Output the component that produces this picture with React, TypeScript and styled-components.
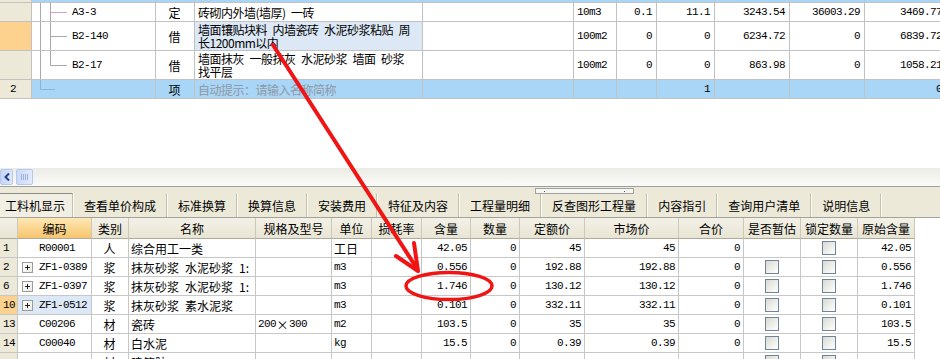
import React from 'react';
import styled, { createGlobalStyle } from 'styled-components';

const CJK = `"Noto Sans CJK SC", "Noto Sans", sans-serif`;
const MONO = `"Liberation Mono", "Noto Sans CJK SC", monospace`;

const GlobalStyle = createGlobalStyle`
  html, body { margin: 0; padding: 0; background: #fff; }
  body { font-family: ${CJK}; font-size: 12px; color: #000; }
  * { box-sizing: border-box; }
`;

const TOP_COLS = '32px 124px 39px 228px 151px 43px 40px 58px 75px 75px 82px';
const LOW_COLS =
  '18px 74px 37px 127px 76px 40px 50px 49px 49px 65px 94px 65px 57px 57px 57px';

type Align = 'left' | 'center' | 'right';
const justify = (a?: Align) =>
  a === 'center' ? 'center' : a === 'right' ? 'flex-end' : 'flex-start';

// the old grid font has half-width (6px) spaces; an en space gives the same gap
const wide = (s: string) => s.replace(/ /g, '\u2002');

interface TopItem {
  ind: string;
  indHot?: boolean;
  code: string;
  tree: 'mid' | 'last' | 'tail';
  pink?: boolean;
  type: string;
  name: string[];
  placeholder?: boolean;
  nameSel?: boolean;
  unit: string;
  vals: string[];
  h: number;
  blue?: boolean;
}

const topRows: TopItem[] = [
  {
    ind: '',
    code: 'A3-3',
    tree: 'mid',
    pink: true,
    type: '定',
    name: ['砖砌内外墙(墙厚) 一砖'],
    unit: '10m3',
    vals: ['0.1', '11.1', '3243.54', '36003.29', '3469.77'],
    h: 19,
  },
  {
    ind: '',
    indHot: true,
    code: 'B2-140',
    tree: 'mid',
    type: '借',
    name: ['墙面镶贴块料 内墙瓷砖 水泥砂浆粘贴 周', '长1200mm以内'],
    nameSel: true,
    unit: '100m2',
    vals: ['0', '0', '6234.72', '0', '6839.72'],
    h: 29,
  },
  {
    ind: '',
    code: 'B2-17',
    tree: 'last',
    type: '借',
    name: ['墙面抹灰 一般抹灰 水泥砂浆 墙面 砂浆', '找平层'],
    unit: '100m2',
    vals: ['0', '0', '863.98', '0', '1058.21'],
    h: 29,
  },
  {
    ind: '2',
    code: '',
    tree: 'tail',
    type: '项',
    name: ['自动提示：请输入名称简称'],
    placeholder: true,
    unit: '',
    vals: ['', '1', '', '', '0'],
    h: 19,
    blue: true,
  },
];

interface LowItem {
  no: string;
  hot?: boolean;
  code: string;
  plus?: boolean;
  sel?: boolean;
  kind: string;
  name: string;
  spec?: boolean;
  unit: string;
  unitCjk?: boolean;
  qty: string;
  count: string;
  base: string;
  market: string;
  total: string;
  est: boolean;
  lock: boolean;
  orig: string;
}

const lowRows: LowItem[] = [
  { no: '1', code: 'R00001', kind: '人', name: '综合用工一类', unit: '工日', unitCjk: true, qty: '42.05', count: '0', base: '45', market: '45', total: '0', est: false, lock: true, orig: '42.05' },
  { no: '2', code: 'ZF1-0389', plus: true, kind: '浆', name: '抹灰砂浆 水泥砂浆 1:', unit: 'm3', qty: '0.556', count: '0', base: '192.88', market: '192.88', total: '0', est: true, lock: true, orig: '0.556' },
  { no: '6', code: 'ZF1-0397', plus: true, kind: '浆', name: '抹灰砂浆 水泥砂浆 1:', unit: 'm3', qty: '1.746', count: '0', base: '130.12', market: '130.12', total: '0', est: true, lock: true, orig: '1.746' },
  { no: '10', hot: true, code: 'ZF1-0512', plus: true, sel: true, kind: '浆', name: '抹灰砂浆 素水泥浆', unit: 'm3', qty: '0.101', count: '0', base: '332.11', market: '332.11', total: '0', est: true, lock: true, orig: '0.101' },
  { no: '13', code: 'C00206', kind: '材', name: '瓷砖', spec: true, unit: 'm2', qty: '103.5', count: '0', base: '35', market: '35', total: '0', est: true, lock: true, orig: '103.5' },
  { no: '14', code: 'C00040', kind: '材', name: '白水泥', unit: 'kg', qty: '15.5', count: '0', base: '0.39', market: '0.39', total: '0', est: true, lock: true, orig: '15.5' },
  { no: '', code: '', kind: '材', name: '建筑胶', unit: '', qty: '', count: '', base: '', market: '', total: '', est: true, lock: true, orig: '' },
];

const headers = [
  '', '编码', '类别', '名称', '规格及型号', '单位', '损耗率', '含量', '数量',
  '定额价', '市场价', '合价', '是否暂估', '锁定数量', '原始含量',
];

const tabs = [
  '工料机显示', '查看单价构成', '标准换算', '换算信息', '安装费用', '特征及内容',
  '工程量明细', '反查图形工程量', '内容指引', '查询用户清单', '说明信息',
];

function TreeLines({ h, kind, pink }: { h: number; kind: TopItem['tree']; pink?: boolean }) {
  const mid = kind === 'tail' ? 9.5 : Math.round(h / 2) + 0.5;
  const line = '#a9a9a9';
  if (kind === 'tail') {
    return (
      <TreeSvg width={36} height={h}>
        <line x1={8.5} y1={0} x2={8.5} y2={mid} stroke="#8fb4d6" />
        <line x1={8.5} y1={mid} x2={23} y2={mid} stroke="#8fb4d6" />
      </TreeSvg>
    );
  }
  return (
    <TreeSvg width={36} height={h}>
      <line x1={8.5} y1={0} x2={8.5} y2={h} stroke={line} />
      <line x1={18.5} y1={0} x2={18.5} y2={kind === 'last' ? mid : h} stroke={line} />
      <line x1={18.5} y1={mid} x2={35} y2={mid} stroke={pink ? '#d3a2cc' : line} />
    </TreeSvg>
  );
}

function TopGrid() {
  return (
    <TopWrap>
      <TopRow $h={3}>
        <IndCell />
        {Array.from({ length: 10 }).map((_, i) => (
          <TopCell key={i} $bg="#a9d5f6" />
        ))}
      </TopRow>
      {topRows.map((r, i) => {
        const bg = r.blue ? '#a9d5f6' : '#fff';
        return (
          <TopRow key={i} $h={r.h}>
            <IndCell $hot={r.indHot}>{r.ind}</IndCell>
            <TreeCell $bg={bg}>
              <TreeLines h={r.h - 1} kind={r.tree} pink={r.pink} />
              <Code>{r.code}</Code>
            </TreeCell>
            <TopCell $bg={bg} $align="center">{r.type}</TopCell>
            <NameCell $bg={r.nameSel ? '#dce8f6' : bg} $muted={r.placeholder}>
              {r.name.map((n, j) => (
                <div key={j}>{wide(n)}</div>
              ))}
            </NameCell>
            <TopCell $bg={bg} />
            <TopCell $bg={bg} $mono>{r.unit}</TopCell>
            {r.vals.map((v, j) => (
              <TopCell key={j} $bg={bg} $mono $align="right">{v}</TopCell>
            ))}
          </TopRow>
        );
      })}
    </TopWrap>
  );
}

function ScrollBar() {
  return (
    <HScroll>
      <ArrowBtn>
        <svg width={8} height={10} viewBox="0 0 8 10">
          <path d="M6 1.5 L2.5 5 L6 8.5" fill="none" stroke="#23428a" strokeWidth={2} />
        </svg>
      </ArrowBtn>
      <Thumb>
        <Grip />
        <Grip />
        <Grip />
        <Grip />
      </Thumb>
    </HScroll>
  );
}

function Tabs() {
  return (
    <TabBar>
      <Splitter>
        <Dot />
        <Dot />
      </Splitter>
      {tabs.map((t, i) => (
        <Tab key={t} $active={i === 0}>{t}</Tab>
      ))}
    </TabBar>
  );
}

function LowerGrid() {
  return (
    <LowWrap>
      <LowRow $head>
        {headers.map((h, i) => (
          <HeadCell key={i} $hot={i === 1}>{h}</HeadCell>
        ))}
      </LowRow>
      {lowRows.map((r, i) => (
        <LowRow key={i}>
          <NoCell $hot={r.hot}>{r.no}</NoCell>
          <CodeCell $sel={r.sel}>
            {r.plus ? <PlusBox /> : <PlusSpace />}
            {r.code}
          </CodeCell>
          <LowCell $align="center">{r.kind}</LowCell>
          <LowCell>{wide(r.name)}</LowCell>
          <LowCell $mono>
            {r.spec ? (
              <>
                200<Wide>×</Wide>300
              </>
            ) : null}
          </LowCell>
          <LowCell $mono={!r.unitCjk}>{r.unit}</LowCell>
          <LowCell />
          <LowCell $mono $align="right">{r.qty}</LowCell>
          <LowCell $mono $align="right">{r.count}</LowCell>
          <LowCell $mono $align="right">{r.base}</LowCell>
          <LowCell $mono $align="right">{r.market}</LowCell>
          <LowCell $mono $align="right">{r.total}</LowCell>
          <LowCell $align="center">{r.est && <Check />}</LowCell>
          <LowCell $align="center">{r.lock && <Check />}</LowCell>
          <LowCell $mono $align="right">{r.orig}</LowCell>
        </LowRow>
      ))}
    </LowWrap>
  );
}

export default function App() {
  return (
    <>
      <GlobalStyle />
      <Page>
        <TopGrid />
        <Blank />
        <ScrollBar />
        <Tabs />
        <LowerGrid />
        <Overlay width={940} height={359} viewBox="0 0 940 359">
          <line x1={273} y1={45} x2={416} y2={267} stroke="#f01414" strokeWidth={4} strokeLinecap="round" />
          <polyline
            points="396,256 418,271 414,243"
            fill="none"
            stroke="#f01414"
            strokeWidth={4}
            strokeLinecap="round"
            strokeLinejoin="round"
          />
          <ellipse cx={449} cy={286} rx={43} ry={13.5} fill="none" stroke="#f01414" strokeWidth={3.5} />
        </Overlay>
      </Page>
    </>
  );
}

const Page = styled.div`
  position: relative;
  width: 940px;
  height: 359px;
  overflow: hidden;
  display: flex;
  flex-direction: column;
  background: #fff;
`;

const TopWrap = styled.div`
  display: flex;
  flex-direction: column;
  flex-shrink: 0;
`;

const TopRow = styled.div<{ $h: number }>`
  display: grid;
  grid-template-columns: ${TOP_COLS};
  height: ${(p) => p.$h}px;
  flex-shrink: 0;
`;

const TopCell = styled.div<{ $bg?: string; $align?: Align; $mono?: boolean }>`
  display: flex;
  align-items: center;
  justify-content: ${(p) => justify(p.$align)};
  padding: 0 4px 0 3px;
  background: ${(p) => p.$bg ?? '#fff'};
  border-right: 1px solid #c2c2c2;
  border-bottom: 1px solid #c2c2c2;
  overflow: hidden;
  white-space: nowrap;
  font-family: ${(p) => (p.$mono ? MONO : CJK)};
  font-size: ${(p) => (p.$mono ? '11px' : '12px')};
  letter-spacing: ${(p) => (p.$mono ? '-0.6px' : '0')};
`;

const IndCell = styled.div<{ $hot?: boolean }>`
  display: flex;
  align-items: center;
  padding-left: 10px;
  background: ${(p) => (p.$hot ? '#fdd28f' : '#ece9d8')};
  border-right: 1px solid #c2c2c2;
  border-bottom: 1px solid #c2c2c2;
  font-family: ${MONO};
  font-size: 11px;
  letter-spacing: -0.6px;
`;

const TreeCell = styled.div<{ $bg: string }>`
  display: flex;
  align-items: center;
  background: ${(p) => p.$bg};
  border-right: 1px solid #c2c2c2;
  border-bottom: 1px solid #c2c2c2;
  overflow: hidden;
`;

const TreeSvg = styled.svg`
  flex-shrink: 0;
  align-self: flex-start;
`;

const Code = styled.span`
  padding-left: 4px;
  font-family: ${MONO};
  font-size: 11px;
  letter-spacing: -0.6px;
  white-space: nowrap;
`;

const NameCell = styled.div<{ $bg: string; $muted?: boolean }>`
  display: flex;
  flex-direction: column;
  justify-content: center;
  padding: 0 1px 0 3px;
  background: ${(p) => p.$bg};
  color: ${(p) => (p.$muted ? '#8e9aa6' : '#000')};
  border-right: 1px solid #c2c2c2;
  border-bottom: 1px solid #c2c2c2;
  font-size: 12px;
  line-height: 13px;
  white-space: nowrap;
  overflow: hidden;
  letter-spacing: -0.5px;
`;

const Blank = styled.div`
  height: 69px;
  flex-shrink: 0;
  background: #fff;
`;

const HScroll = styled.div`
  height: 19px;
  flex-shrink: 0;
  display: flex;
  align-items: center;
  gap: 3px;
  padding-bottom: 1px;
  background: linear-gradient(#ecece6, #fafaf8);
  border-bottom: 1px solid #9f9f9f;
`;

const ArrowBtn = styled.div`
  width: 13px;
  height: 16px;
  display: flex;
  align-items: center;
  justify-content: center;
  border: 1px solid #b7c8ea;
  border-radius: 2px;
  background: linear-gradient(90deg, #c4d5f7, #dde7fb);
`;

const Thumb = styled.div`
  width: 17px;
  height: 16px;
  display: flex;
  align-items: center;
  justify-content: center;
  gap: 1px;
  border: 1px solid #b7c8ea;
  border-radius: 2px;
  background: linear-gradient(90deg, #cbdaf8, #e3ebfc);
`;

const Grip = styled.span`
  width: 1px;
  height: 6px;
  background: #9fb3dc;
`;

const TabBar = styled.div`
  position: relative;
  height: 31px;
  flex-shrink: 0;
  display: flex;
  align-items: flex-end;
  background: #ece9d8;
  border-bottom: 1px solid #a3a29b;
`;

const Splitter = styled.div`
  position: absolute;
  left: 535px;
  top: 1px;
  width: 99px;
  height: 6px;
  display: flex;
  justify-content: space-between;
  align-items: center;
  padding: 0 8px;
  border: 1px solid #a2a2a2;
  background: #f6f6f2;
`;

const Dot = styled.span`
  width: 1px;
  height: 1px;
  background: #555;
`;

const Tab = styled.div<{ $active?: boolean }>`
  height: 24px;
  display: flex;
  align-items: center;
  padding: ${(p) => (p.$active ? '0 7px 0 5px' : '0 10px 0 11px')};
  font-size: 12px;
  white-space: nowrap;
  border-right: 1px solid #c4c0ae;
  box-shadow: 1px 0 0 #fbfaf5;
  border-top: 1px solid ${(p) => (p.$active ? '#8e8d86' : 'transparent')};
  background: ${(p) => (p.$active ? '#f1efe4' : 'transparent')};
`;

const LowWrap = styled.div`
  width: 915px;
  flex-shrink: 0;
  display: flex;
  flex-direction: column;
`;

const LowRow = styled.div<{ $head?: boolean }>`
  display: grid;
  grid-template-columns: ${LOW_COLS};
  height: ${(p) => (p.$head ? 21 : 19)}px;
  flex-shrink: 0;
`;

const HeadCell = styled.div<{ $hot?: boolean }>`
  display: flex;
  align-items: center;
  justify-content: center;
  font-size: 12px;
  white-space: nowrap;
  overflow: hidden;
  background: ${(p) =>
    p.$hot
      ? 'linear-gradient(#fde7b4, #f8c56e)'
      : 'linear-gradient(#f3f1e7, #e8e5d4)'};
  border-right: 1px solid #cdc9b9;
  border-bottom: 1px solid #aeab9c;
`;

const NoCell = styled.div<{ $hot?: boolean }>`
  display: flex;
  align-items: center;
  padding-left: 3px;
  background: ${(p) => (p.$hot ? '#fdd28f' : '#ece9d8')};
  border-right: 1px solid #c7c7c7;
  border-bottom: 1px solid #c7c7c7;
  font-family: ${MONO};
  font-size: 11px;
  letter-spacing: -0.6px;
`;

const LowCell = styled.div<{ $align?: Align; $mono?: boolean }>`
  display: flex;
  align-items: center;
  justify-content: ${(p) => justify(p.$align)};
  padding: 0 3px 0 2px;
  border-right: 1px solid #c7c7c7;
  border-bottom: 1px solid #c7c7c7;
  white-space: nowrap;
  overflow: hidden;
  font-family: ${(p) => (p.$mono ? MONO : CJK)};
  font-size: ${(p) => (p.$mono ? '11px' : '12px')};
  letter-spacing: ${(p) => (p.$mono ? '-0.6px' : '0')};
`;

const CodeCell = styled.div<{ $sel?: boolean }>`
  display: flex;
  align-items: center;
  gap: 6px;
  padding-left: 4px;
  background: ${(p) => (p.$sel ? '#dce8f6' : '#fff')};
  border-right: 1px solid #c7c7c7;
  border-bottom: 1px solid #c7c7c7;
  font-family: ${MONO};
  font-size: 11px;
  letter-spacing: -0.6px;
  white-space: nowrap;
`;

const PlusBox = styled.span`
  position: relative;
  width: 11px;
  height: 11px;
  flex-shrink: 0;
  border: 1px solid #9c9c9c;
  background: linear-gradient(135deg, #ffffff, #ecebe4);

  &::before,
  &::after {
    content: '';
    position: absolute;
    background: #222;
  }
  &::before {
    left: 2px;
    right: 2px;
    top: 4px;
    height: 1px;
  }
  &::after {
    top: 2px;
    bottom: 2px;
    left: 4px;
    width: 1px;
  }
`;

const PlusSpace = styled.span`
  width: 11px;
  flex-shrink: 0;
`;

const Wide = styled.span`
  font-family: ${CJK};
  font-size: 12px;
  letter-spacing: 0;
  padding: 0 0.5px;
`;

const Check = styled.span`
  width: 14px;
  height: 14px;
  border: 1px solid #6f849b;
  background: linear-gradient(135deg, #d9d9d2 0%, #efefea 55%, #ffffff 100%);
`;

const Overlay = styled.svg`
  position: absolute;
  left: 0;
  top: 0;
  pointer-events: none;
`;
